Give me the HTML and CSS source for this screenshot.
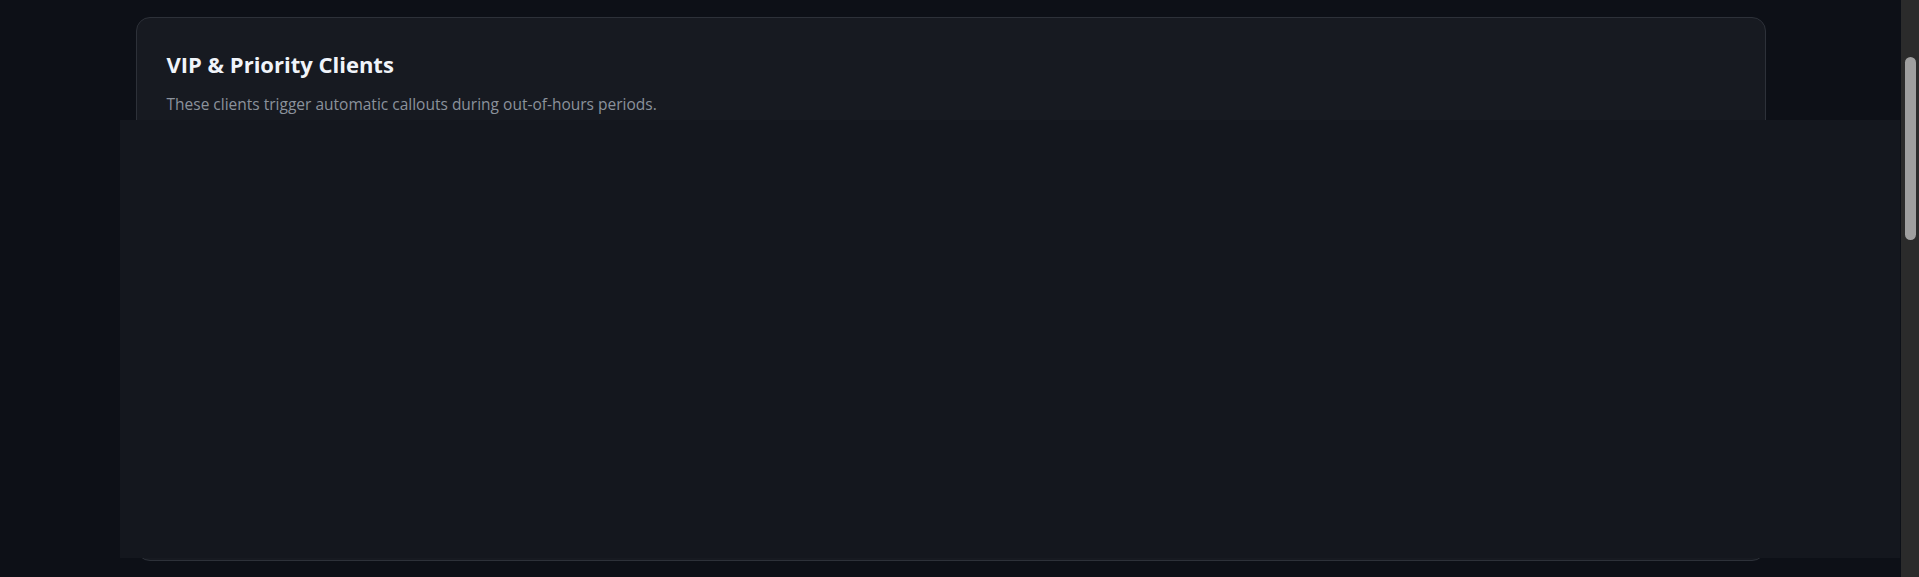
FILE: index.html
```html
<!DOCTYPE html>
<html lang="en">

<head>
  <meta charset="UTF-8">
  <meta name="viewport" content="width=device-width, initial-scale=1.0">
  <title>Out-of-hours callouts</title>
  <link rel="stylesheet" href="styles.css">
</head>

<body>
  <main class="page">
    <section class="card">
      <h2 class="card-title">VIP &amp; Priority Clients</h2>
      <p class="card-desc">These clients trigger automatic callouts during out-of-hours periods.</p>
    </section>
    <div class="spacer"></div>
  </main>

  <!-- panel that sits over the card -->
  <div class="panel"></div>

  <!-- window scrollbar -->
  <div class="scrollbar">
    <div class="scrollbar-thumb"></div>
  </div>
</body>

</html>
```

FILE: styles.css
```css
* {
  box-sizing: border-box;
}

html {
  background: #0d1017;
}

body {
  margin: 0;
  padding-right: 18px;
  background: #0d1017;
  color: #e6edf3;
  font-family: "Open Sans", "Noto Sans", sans-serif;
}

.page {
  width: 1630px;
  margin: 0 auto;
  padding-top: 17px;
}

.card {
  height: 544px;
  padding: 31px 30px;
  background: #171a21;
  border: 1px solid #2d3139;
  border-radius: 14px;
}

.card-title {
  margin: 0 0 14px;
  font-size: 22px;
  line-height: 30px;
  font-weight: 700;
  color: #f0f4fa;
}

.card-desc {
  margin: 0;
  font-size: 15.5px;
  line-height: 22px;
  color: #8b929c;
}

.spacer {
  height: 1300px;
}

.panel {
  position: fixed;
  top: 120px;
  left: 120px;
  width: 1780px;
  height: 438px;
  background: #14171e;
}

.scrollbar {
  position: fixed;
  top: 0;
  right: 0;
  width: 18px;
  height: 100%;
  padding: 57px 3px 0 4px;
  background: #2b2b2b;
}

.scrollbar-thumb {
  width: 11px;
  height: 183px;
  border-radius: 6px;
  background: #9f9f9f;
}
```
